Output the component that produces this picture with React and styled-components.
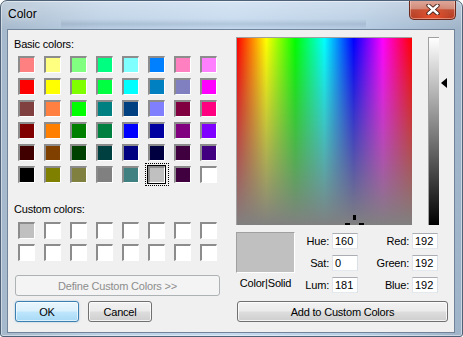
import React from 'react';
import styled, { createGlobalStyle, css } from 'styled-components';

const GlobalStyle = createGlobalStyle`
  html, body {
    margin: 0;
    padding: 0;
    background: #ffffff;
    overflow: hidden;
  }
  * {
    box-sizing: border-box;
  }
`;

const UI = `'Liberation Sans', Arial, sans-serif`;

const basicColors = [
  '#ff8080', '#ffff80', '#80ff80', '#00ff80', '#80ffff', '#0080ff', '#ff80c0', '#ff80ff',
  '#ff0000', '#ffff00', '#80ff00', '#00ff40', '#00ffff', '#0080c0', '#8080c0', '#ff00ff',
  '#804040', '#ff8040', '#00ff00', '#008080', '#004080', '#8080ff', '#800040', '#ff0080',
  '#800000', '#ff8000', '#008000', '#008040', '#0000ff', '#0000a0', '#800080', '#8000ff',
  '#400000', '#804000', '#004000', '#004040', '#000080', '#000040', '#400040', '#400080',
  '#000000', '#808000', '#808040', '#808080', '#408080', '#c0c0c0', '#400040', '#ffffff',
];

const customColors = ['#c0c0c0', ...Array(15).fill('#ffffff')];

const current = { hue: 160, sat: 0, lum: 181, red: 192, green: 192, blue: 192 };

const Window = styled.div`
  width: 463px;
  height: 337px;
  display: flex;
  flex-direction: column;
  border: 1px solid #4f6176;
  border-radius: 7px 7px 3px 3px;
  background:
    linear-gradient(to bottom, rgba(70, 90, 120, 0) 18px, rgba(70, 90, 120, 0.16) 23px, rgba(70, 90, 120, 0) 28px) 60px 0 / 305px 30px no-repeat,
    linear-gradient(to bottom, rgba(255, 255, 255, 0.3), rgba(255, 255, 255, 0) 28px),
    linear-gradient(to right, #a6b9cc 0%, #bbd0e5 22%, #c4d9ee 50%, #b7cde3 78%, #9fb3c8 100%);
  box-shadow: inset 0 0 0 1px rgba(255, 255, 255, 0.45);
  font-family: ${UI};
  overflow: hidden;
`;

const TitleBar = styled.div`
  height: 28px;
  display: flex;
  align-items: flex-start;
`;

const TitleText = styled.div`
  margin: 6px 0 0 7px;
  font-size: 12px;
  line-height: 15px;
  color: #000;
  text-shadow: 0 0 6px rgba(255, 255, 255, 0.9);
`;

const CloseButton = styled.div`
  margin: -1px 6px 0 auto;
  width: 47px;
  height: 20px;
  display: flex;
  align-items: center;
  justify-content: center;
  border: 1px solid #6b2a1c;
  border-top: none;
  border-radius: 0 0 5px 5px;
  background:
    radial-gradient(ellipse at 50% 100%, rgba(255, 90, 50, 0.7), rgba(255, 90, 50, 0) 60%),
    linear-gradient(#dfa99b 0%, #d28c7b 45%, #c24f34 52%, #b63b20 100%);
  box-shadow: inset 0 0 0 1px rgba(255, 220, 210, 0.45);
`;

const Client = styled.div`
  flex: 1;
  margin: 0 7px 3px 6px;
  display: flex;
  padding: 7px 5px 0 6px;
  background: #f0f0f0;
  border: 1px solid #71849a;
`;

const LeftPane = styled.div`
  width: 207px;
  display: flex;
  flex-direction: column;
`;

const Label = styled.div`
  font-size: 11px;
  letter-spacing: -0.2px;
  line-height: 15px;
  color: #000;
  margin-top: ${p => p.$gap || 0}px;
`;

const SwatchGrid = styled.div`
  display: grid;
  grid-template-columns: repeat(8, 17px);
  grid-auto-rows: 17px;
  column-gap: 9px;
  row-gap: 5px;
  margin: ${p => p.$gap}px 0 0 4px;
`;

const Swatch = styled.div`
  position: relative;
  background: ${p => p.$color};
  border-style: solid;
  border-width: 2px 1px 1px 2px;
  border-color: #8c8c8c #ffffff #ffffff #8c8c8c;
  ${p => p.$selected && css`
    outline: 1px solid #000;
    &::after {
      content: '';
      position: absolute;
      inset: -5px -5px -4px -5px;
      border: 1px dotted #000;
    }
  `}
`;

const Button = styled.button`
  height: 21px;
  width: ${p => p.$width}px;
  margin: ${p => p.$margin || '0'};
  padding: 0;
  display: flex;
  align-items: center;
  justify-content: center;
  font-family: ${UI};
  font-size: 11px;
  letter-spacing: -0.2px;
  color: #000;
  border: 1px solid #707070;
  border-radius: 3px;
  background: linear-gradient(#f2f2f2 0%, #ebebeb 48%, #dddddd 52%, #cfcfcf 100%);
  box-shadow: inset 0 0 0 1px rgba(255, 255, 255, 0.75);
  ${p => p.$variant === 'default' && css`
    border-color: #3c7fb1;
    background: linear-gradient(#eaf6fd 0%, #d9f0fc 48%, #bee6fd 52%, #a7d9f5 100%);
    box-shadow: inset 0 0 0 1px rgba(255, 255, 255, 0.6), 0 0 2px rgba(60, 127, 177, 0.4);
  `}
  ${p => p.$variant === 'disabled' && css`
    color: #8d8d8d;
    border-color: #adb2b5;
    background: #f4f4f4;
    box-shadow: none;
  `}
`;

const ButtonRow = styled.div`
  display: flex;
  gap: 9px;
  margin: 5px 0 0 1px;
`;

const RightPane = styled.div`
  width: 212px;
  margin-left: 15px;
  display: flex;
  flex-direction: column;
`;

const PickerRow = styled.div`
  display: flex;
  align-items: flex-start;
`;

const Spectrum = styled.div`
  position: relative;
  width: 176px;
  height: 188px;
  overflow: hidden;
  border-style: solid;
  border-width: 1px 0 0 1px;
  border-color: #a0a0a0;
  background:
    linear-gradient(to bottom, rgba(128, 128, 128, 0), rgb(128, 128, 128)),
    linear-gradient(to right, #ff0000 0%, #ffff00 16.67%, #00ff00 33.33%, #00ffff 50%, #0000ff 66.67%, #ff00ff 83.33%, #ff0000 100%);
`;

const Crosshair = styled.svg`
  position: absolute;
  left: ${p => p.$x - 12}px;
  top: 176px;
`;

const LumSlider = styled.div`
  position: relative;
  width: 20px;
  height: 188px;
  margin-left: 16px;
`;

const LumBar = styled.div`
  width: 11px;
  height: 188px;
  border-style: solid;
  border-width: 1px 0 0 1px;
  border-color: #a0a0a0;
  background: linear-gradient(#ffffff, #000000);
`;

const LumArrow = styled.div`
  position: absolute;
  left: 13px;
  top: ${p => p.$pos - 5}px;
  width: 0;
  height: 0;
  border-top: 5.5px solid transparent;
  border-bottom: 5.5px solid transparent;
  border-right: 6px solid #000;
`;

const InfoRow = styled.div`
  display: flex;
  margin-top: 7px;
`;

const SampleColumn = styled.div`
  width: 59px;
  display: flex;
  flex-direction: column;
`;

const Sample = styled.div`
  height: 41px;
  background: ${p => p.$color};
  border: 1px solid;
  border-color: #a0a0a0 #ffffff #ffffff #a0a0a0;
`;

const SampleLabel = styled.div`
  margin-top: 3px;
  text-align: center;
  font-size: 11px;
  letter-spacing: -0.2px;
  line-height: 15px;
  color: #000;
`;

const FieldGrid = styled.div`
  display: grid;
  grid-template-columns: 37px 26px 54px 26px;
  grid-auto-rows: 16px;
  row-gap: 6px;
  margin-top: 1px;
`;

const FieldLabel = styled.div`
  padding-right: 3px;
  text-align: right;
  font-size: 11px;
  letter-spacing: -0.2px;
  line-height: 16px;
  color: #000;
`;

const Field = styled.div`
  padding-left: 2px;
  font-size: 11px;
  line-height: 14px;
  color: #000;
  background: #fff;
  border: 1px solid;
  border-color: #abadb3 #dbdfe6 #e3e9ef #e2e3ea;
`;

export default function App() {
  const hueX = Math.round((current.hue / 239) * 176) - 1;
  const lumPos = Math.round((1 - current.lum / 240) * 188);
  const fields = [
    ['Hue:', current.hue, 'Red:', current.red],
    ['Sat:', current.sat, 'Green:', current.green],
    ['Lum:', current.lum, 'Blue:', current.blue],
  ];

  return (
    <>
      <GlobalStyle />
      <Window>
        <TitleBar>
          <TitleText>Color</TitleText>
          <CloseButton>
            <svg width="14" height="11" viewBox="0 0 14 11">
              <path d="M2.5 1.5 L11.5 9.5 M11.5 1.5 L2.5 9.5" stroke="#3a1a14" strokeWidth="4.2" strokeLinecap="round" />
              <path d="M2.5 1.5 L11.5 9.5 M11.5 1.5 L2.5 9.5" stroke="#ffffff" strokeWidth="2.4" strokeLinecap="round" />
            </svg>
          </CloseButton>
        </TitleBar>
        <Client>
          <LeftPane>
            <Label>Basic colors:</Label>
            <SwatchGrid $gap={4}>
              {basicColors.map((c, i) => (
                <Swatch key={i} $color={c} $selected={i === 45} />
              ))}
            </SwatchGrid>
            <Label $gap={19}>Custom colors:</Label>
            <SwatchGrid $gap={5}>
              {customColors.map((c, i) => (
                <Swatch key={i} $color={c} />
              ))}
            </SwatchGrid>
            <Button $variant="disabled" $width={205} $margin="14px 0 0 1px">
              Define Custom Colors &gt;&gt;
            </Button>
            <ButtonRow>
              <Button $variant="default" $width={64}>OK</Button>
              <Button $width={64}>Cancel</Button>
            </ButtonRow>
          </LeftPane>
          <RightPane>
            <PickerRow>
              <Spectrum>
                <Crosshair $x={hueX} width="24" height="24" viewBox="0 0 24 24">
                  <rect x="11" y="1" width="3" height="5" fill="#000" />
                  <rect x="3" y="9" width="5" height="3" fill="#000" />
                  <rect x="17" y="9" width="5" height="3" fill="#000" />
                  <rect x="11" y="16" width="3" height="5" fill="#000" />
                </Crosshair>
              </Spectrum>
              <LumSlider>
                <LumBar />
                <LumArrow $pos={lumPos} />
              </LumSlider>
            </PickerRow>
            <InfoRow>
              <SampleColumn>
                <Sample $color="#c0c0c0" />
                <SampleLabel>Color|Solid</SampleLabel>
              </SampleColumn>
              <FieldGrid>
                {fields.map(([l1, v1, l2, v2]) => (
                  <React.Fragment key={l1}>
                    <FieldLabel>{l1}</FieldLabel>
                    <Field>{v1}</Field>
                    <FieldLabel>{l2}</FieldLabel>
                    <Field>{v2}</Field>
                  </React.Fragment>
                ))}
              </FieldGrid>
            </InfoRow>
            <Button $width={211} $margin="8px 0 0 1px">Add to Custom Colors</Button>
          </RightPane>
        </Client>
      </Window>
    </>
  );
}
